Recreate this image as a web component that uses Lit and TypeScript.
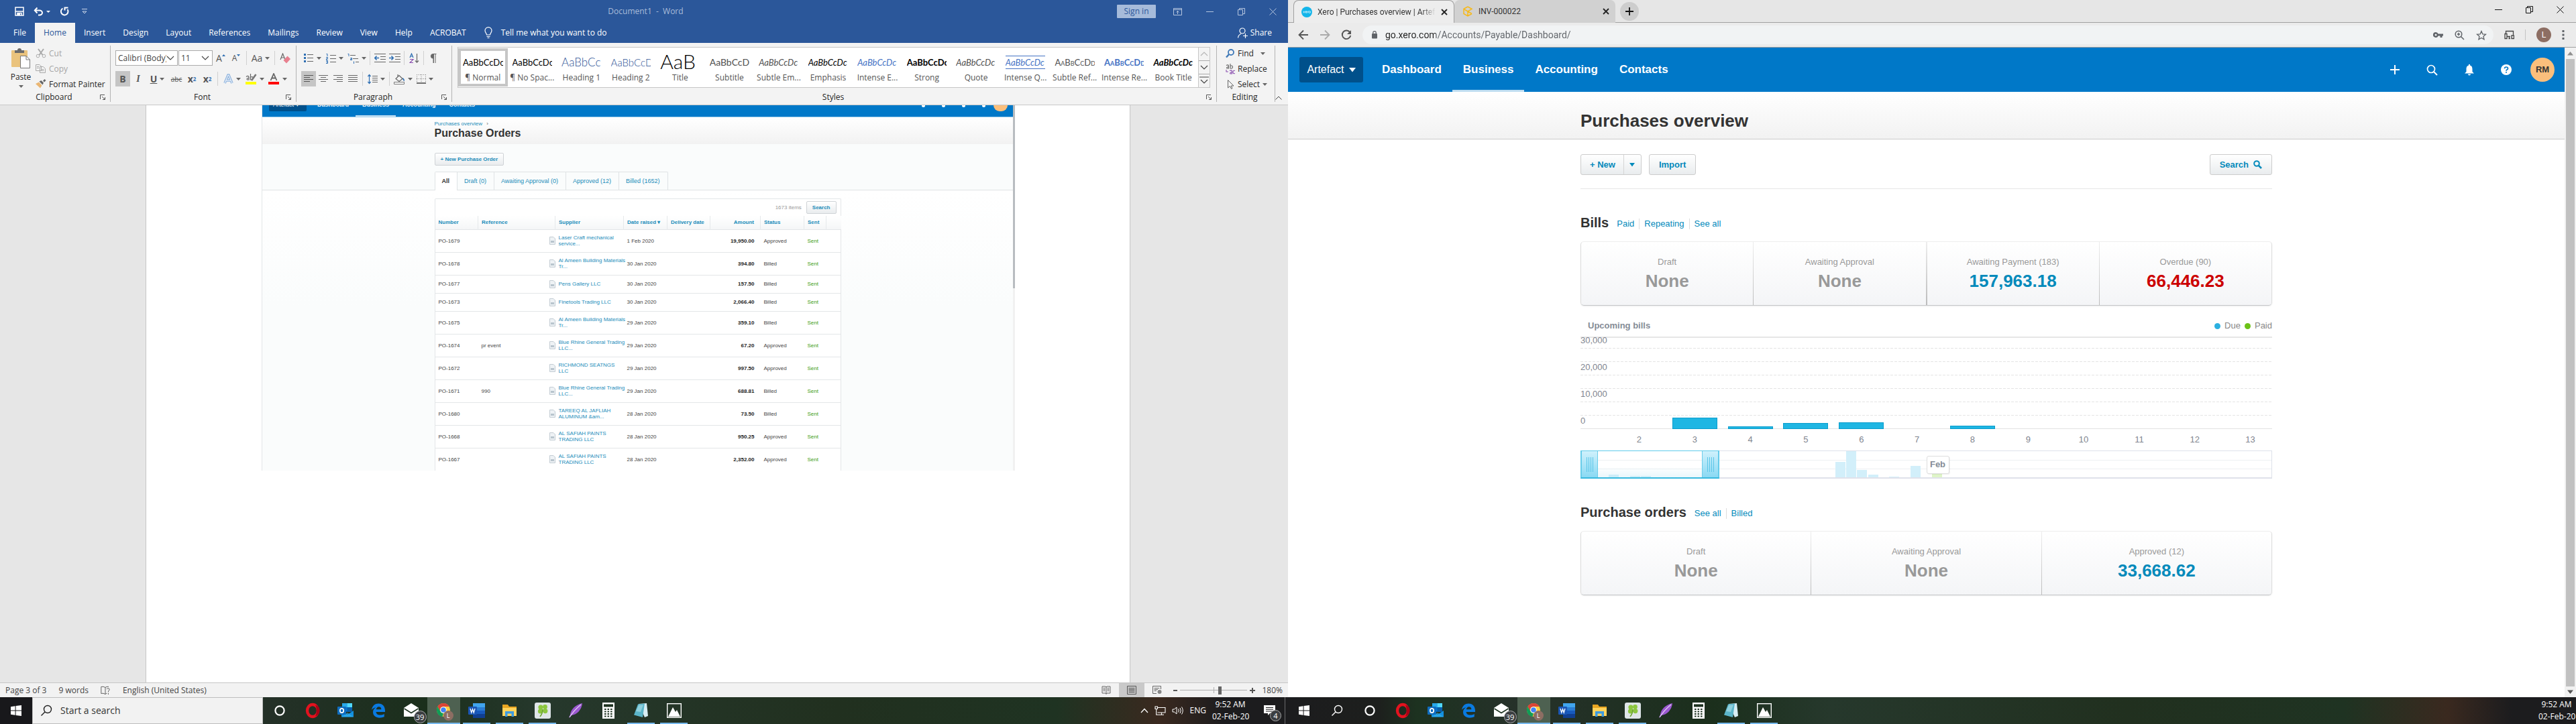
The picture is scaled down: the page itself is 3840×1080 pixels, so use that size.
import { LitElement, html, css, svg, nothing } from "lit";
import { customElement, property } from "lit/decorators.js";
import { classMap } from "lit/directives/class-map.js";

/** Inline icon with its own coordinate system. */
const icon = (w: number, h: number, content: unknown) =>
  html`<svg class="icon" width=${w} height=${h} viewBox="0 0 ${w} ${h}" fill="none" aria-hidden="true">${content}</svg>`;

const resetStyles = css`
  * { box-sizing: border-box; }
  button, input, select { font: inherit; color: inherit; margin: 0; padding: 0; border: 0; background: none; border-radius: 0; outline: none; }
  button { white-space: nowrap; cursor: pointer; }
  a { color: inherit; text-decoration: none; white-space: nowrap; }
  .icon { display: block; flex: none; }
  h1, h2, h3, p { margin: 0; }
`;

/* ------------------------------------------------------------------ */
/* Taskbar                                                             */
/* ------------------------------------------------------------------ */

const windowsLogo = icon(16, 16, svg`<path fill="#fff" d="M0 2.2 6.6 1.3V7.5H0zM7.6 1.1 16 0V7.5H7.6zM0 8.5H6.6V14.7L0 13.8zM7.6 8.5H16V16L7.6 14.9z"/>`);
const lens = (color: string) => icon(18, 18, svg`<circle cx="11" cy="7" r="5.5" stroke=${color} stroke-width="1.4"/><path d="M7 11 1.5 16.5" stroke=${color} stroke-width="1.4"/>`);

interface TaskItem { name: string; state?: "open" | "active"; art: unknown; }

const taskItems: TaskItem[] = [
  { name: "Cortana", art: icon(24, 24, svg`<circle cx="12" cy="12" r="6.6" stroke="#fff" stroke-width="2.2"/>`) },
  { name: "Opera", art: icon(24, 24, svg`<ellipse cx="12" cy="12" rx="8" ry="9" stroke="#e3131f" stroke-width="4.4"/><path d="M16 3.5C21 5 23 9 22.5 13S19 20 16 20.6C18.5 17 18.5 7 16 3.5Z" fill="#a70014"/>`) },
  { name: "Outlook", art: icon(26, 24, svg`<path fill="#0a5ea8" d="M8 1h15v13H8z"/><path fill="#28a8ea" d="M8 1h7.500v6H8z"/><path fill="#50d9ff" d="M15.500 1H23v6h-7.500z"/><path fill="#0078d4" d="M8 7h7.500v6H8z"/><path fill="#1490df" d="M7 12l9 6 9-6v9.500H7z"/><path fill="#35b8f1" d="M7 21.500 16 15l9 6.500z" opacity=".6"/><rect x="1" y="6" width="13" height="12" rx="1" fill="#0f6cbd"/><ellipse cx="7.500" cy="12" rx="2.700" ry="3.200" stroke="#fff" stroke-width="1.700"/>`) },
  { name: "Edge", art: icon(24, 24, svg`<path fill="#0a7ae0" d="M2 11C3 4.500 7 1.500 12.200 1.500 18.500 1.500 22 6 22 12.200V14H8.600C8.800 17 11.300 18.600 14.400 18.600 17 18.600 19 18 20.800 17V21.300C18.800 22.200 16.500 22.700 13.800 22.700 7.800 22.700 4 19.300 4 14.300 4 11 5.800 8.500 8.300 7.200 5.800 7.600 3.500 8.800 2 11ZM8.800 10.300H16.400C16.400 7.700 15 6.200 12.700 6.200 10.500 6.200 9.100 7.900 8.800 10.300Z"/>`) },
  { name: "Mail", art: html`<span class="badged">${icon(24, 22, svg`<path fill="#fff" d="M12 0 23 7V20H1V7z"/><path d="M1.500 8 12 14.500 22.500 8" stroke="#1d3220" stroke-width="1.600"/><path d="M5 7.500 12 12 19 7.500" fill="#fff"/>`)}<span class="badge">39</span></span>` },
  { name: "Chrome", state: "active", art: html`<span class="badged">${icon(24, 24, svg`<circle cx="11" cy="11" r="10" fill="#ffcd40"/><path fill="#db4437" d="M2.300 6A10 10 0 0 1 19.700 6H11A5 5 0 0 0 6.700 13.500z"/><path fill="#0f9d58" d="M2.300 6 6.700 13.500A5 5 0 0 0 11 16L9.500 21A10 10 0 0 1 2.300 6z"/><circle cx="11" cy="11" r="4.800" fill="#fff"/><circle cx="11" cy="11" r="3.800" fill="#4285f4"/>`)}<span class="badge profile">L</span></span>` },
  { name: "Word", state: "open", art: icon(26, 22, svg`<path fill="#41a5ee" d="M7 0h18v6H7z"/><path fill="#2b7cd3" d="M7 6h18v5H7z"/><path fill="#185abd" d="M7 11h18v5H7z"/><path fill="#103f91" d="M7 16h18v6H7z"/><rect x="0" y="5" width="13" height="12" rx="1" fill="#1b56b5"/><path d="M3 8l1.800 6L6.500 8.800 8.200 14 10 8" stroke="#fff" stroke-width="1.300"/>`) },
  { name: "File Explorer", state: "open", art: icon(24, 20, svg`<path fill="#e9a622" d="M1 1h8l2 3h11v4H1z"/><path fill="#ffd35c" d="M1 6h21v12H1z"/><path fill="#3d9be0" d="M5 11h13v8h-3.500v-4.500h-6V19H5z"/>`) },
  { name: "Clover", state: "open", art: icon(24, 24, svg`<rect x="0" y="0" width="24" height="24" rx="3" fill="#dfe5e8"/><g fill="#8cc63f"><circle cx="9" cy="7" r="3.600"/><circle cx="15.500" cy="6.500" r="3.400"/><circle cx="8.500" cy="13" r="3.600"/><circle cx="15.800" cy="12.600" r="3.600"/></g><path d="M12 10C12 15 10.500 18 8 21" stroke="#69a32e" stroke-width="1.600"/>`) },
  { name: "Feather", art: icon(24, 24, svg`<path fill="#9b59d0" d="M22 1C12 3 5 10 4 18L2 23 6 19C14 18 21 11 22 1Z"/><path d="M20 3C14 8 8 14 3 22" stroke="#e6cdf7" stroke-width="1.200"/>`) },
  { name: "Calculator", art: icon(20, 24, svg`<rect x="1" y="0" width="18" height="24" fill="#fff"/><rect x="3" y="2.500" width="14" height="4" fill="#1d3220"/><g fill="#1d3220">${[9, 12.5, 16, 19.5].map((y) => [4, 8.5, 13].map((x) => svg`<rect x=${x} y=${y} width="2.600" height="2"/>`))}</g>`) },
  { name: "Notepad", state: "open", art: icon(24, 24, svg`<path fill="#d8eef4" d="M8 2 20 1 22 20 17 22z"/><path fill="#5bb5c9" d="M7 2.500 17 1.500 14 22 1 18.500z"/><path fill="#a5dbe6" d="M8 4 15 3.200 11 14 4 13z" opacity=".7"/>`) },
  { name: "Photos", state: "open", art: icon(22, 24, svg`<rect x=".7" y="1.700" width="20.600" height="20.600" stroke="#fff" stroke-width="1.400"/><path fill="#fff" d="M2 21 9 7 13 14 15 11 20 21z"/>`) },
];

@customElement("task-bar")
export class TaskBar extends LitElement {
  @property({ type: Boolean }) primary = false;

  static styles = [resetStyles, css`
    :host { display: flex; height: 40px; color: #fff; font: 12px/18px "Open Sans", "Noto Sans", sans-serif;
      background: linear-gradient(90deg, #1c1c1e 0, #1d1f1d 7%, #1d3220 10%, #26312a 18%, #1b2f1c 33%, #26382c 42%, #21301f 65%, #1f3322 82%, #3a291f 90%, #1c1c1e 95%); }
    .slot { flex: none; width: 49px; height: 40px; display: flex; align-items: center; justify-content: center; }
    .slot.start { width: 48px; }
    .slot.start.wide { background: #18181b; }
    .slot.open, .slot.active { position: relative; }
    .slot.open::after, .slot.active::after { content: ""; position: absolute; left: 4px; right: 4px; bottom: 0; height: 2px; background: #76b9ed; }
    .slot.active { background: #4e6151; }
    .slot.active::after { left: 0; right: 0; }
    .find { flex: none; width: 344px; display: flex; align-items: center; gap: 12px; padding-left: 11px; background: #f2f2f2; border: 1px solid #bdbdbd; }
    .find input { flex: 1; min-width: 0; font-size: 14px; color: #333; }
    .find input::placeholder { color: #333; opacity: 1; }
    .badged { position: relative; display: block; }
    .badge { position: absolute; right: -11px; bottom: -8px; width: 19px; height: 19px; border-radius: 50%; background: #3c3f42; border: 1px solid #a8a8a8; font-size: 11px; line-height: 17px; text-align: center; }
    .badge.profile { right: -2px; bottom: -3px; width: 15px; height: 15px; background: #8d6e63; border: 0; font-size: 9px; line-height: 15px; }
    .spacer { flex: 1; }
    .tray { display: flex; align-items: center; gap: 9px; }
    .tray.plain { padding-right: 2px; }
    .clock { width: 54px; text-align: center; }
    .clock p { white-space: nowrap; }
    .note { width: 45px; display: flex; justify-content: center; }
    .note .badge { right: -9px; width: 17px; height: 17px; line-height: 15px; }
    .edge { width: 5px; border-left: 1px solid #6a6a6c; height: 40px; }
  `];

  private item(t: TaskItem) {
    return html`<button class=${classMap({ slot: true, open: t.state === "open", active: t.state === "active" })} aria-label=${t.name}>${t.art}</button>`;
  }

  render() {
    const clock = html`<div class="clock"><p>9:52 AM</p><p>02-Feb-20</p></div>`;
    return html`
      <button class=${classMap({ slot: true, start: true, wide: this.primary })} aria-label="Start">${windowsLogo}</button>
      ${this.primary
        ? html`<label class="find">${lens("#222")}<input type="search" placeholder="Start a search" aria-label="Start a search" /></label>`
        : html`<button class="slot" aria-label="Search">${lens("#fff")}</button>`}
      ${taskItems.map((t) => this.item(t))}
      <div class="spacer"></div>
      ${this.primary
        ? html`<div class="tray">
            ${icon(12, 8, svg`<path d="M1 7 6 1.500 11 7" stroke="#fff" stroke-width="1.300"/>`)}
            ${icon(17, 14, svg`<path d="M4 2.500H16V10H4.500M7 13.300H14M10.500 10V13M1 1h3.500v3.500H1zM2.700 4.500V13.300H7" stroke="#fff" stroke-width="1.100"/>`)}
            ${icon(18, 14, svg`<path d="M1 5H3.500L7 2V12L3.500 9H1zM9.500 4.500Q11 7 9.500 9.500M12 3Q14.500 7 12 11M14.500 1.500Q18 7 14.500 12.500" stroke="#fff" stroke-width="1"/>`)}
            <span>ENG</span>
            ${clock}
            <button class="note" aria-label="Notifications"><span class="badged">${icon(17, 16, svg`<path fill="#fff" d="M0 0H17V12H9L6 15V12H0z"/><path d="M3 3.500H14M3 6.200H14M3 9H14" stroke="#1c1c1e" stroke-width="1"/>`)}<span class="badge">4</span></span></button>
          </div><span class="edge"></span>`
        : html`<div class="tray plain">${clock}</div>`}
    `;
  }
}

/* ------------------------------------------------------------------ */
/* Purchase order list shown inside the document                       */
/* ------------------------------------------------------------------ */

const orders: [string, string, string[], string, string, string][] = [
  ["PO-1679", "", ["Laser Craft mechanical", "service..."], "1 Feb 2020", "19,950.00", "Approved"],
  ["PO-1678", "", ["Al Ameen Building Materials", "Tr..."], "30 Jan 2020", "394.80", "Billed"],
  ["PO-1677", "", ["Pens Gallery LLC"], "30 Jan 2020", "157.50", "Billed"],
  ["PO-1673", "", ["Finetools Trading LLC"], "30 Jan 2020", "2,066.40", "Billed"],
  ["PO-1675", "", ["Al Ameen Building Materials", "Tr..."], "29 Jan 2020", "359.10", "Billed"],
  ["PO-1674", "pr event", ["Blue Rhine General Trading", "LLC..."], "29 Jan 2020", "67.20", "Approved"],
  ["PO-1672", "", ["RICHMOND SEATNGS", "LLC"], "29 Jan 2020", "997.50", "Approved"],
  ["PO-1671", "990", ["Blue Rhine General Trading", "LLC..."], "29 Jan 2020", "688.81", "Billed"],
  ["PO-1680", "", ["TAREEQ AL JAFLIAH", "ALUMINUM &am..."], "28 Jan 2020", "73.50", "Billed"],
  ["PO-1668", "", ["AL SAFIAH PAINTS", "TRADING LLC"], "28 Jan 2020", "950.25", "Approved"],
  ["PO-1667", "", ["AL SAFIAH PAINTS", "TRADING LLC"], "28 Jan 2020", "2,352.00", "Approved"],
];

@customElement("purchase-orders")
export class PurchaseOrders extends LitElement {
  static styles = [resetStyles, css`
    :host { display: flex; font: 8px/9px "Liberation Sans", Arial, sans-serif; color: #444; }
    .main { flex: 1; min-width: 0; background: linear-gradient(#fff 126px, #fafcfc 300px); border-left: 1px solid #e3e6e8; }
    .rail { width: 3px; background: linear-gradient(#b8bcc0 273px, #f1f1f1 273px); }
    .nav { display: flex; align-items: flex-start; height: 18px; overflow: hidden; padding-left: 10px; background: #0078c8; color: #fff; font-size: 9px; font-weight: 700; line-height: 10px; border-bottom: 1px solid #9ccbea; }
    .nav a { padding: 0 10px; height: 17px; }
    .nav a span { display: block; margin-top: -6px; }
    .nav .org { width: 56px; height: 9px; background: #00508b; border-radius: 0 0 2px 2px; font-weight: 400; padding: 0 6px; margin-right: 6px; }
    .nav .on { box-shadow: inset 0 -2px #cfe5f5; }
    .nav .grow { flex: 1; }
    .nav .tools { display: flex; gap: 25px; padding-right: 12px; }
    .nav .dot { width: 5px; height: 3px; background: #fff; border-radius: 0 0 3px 3px; }
    .nav .face { width: 21px; height: 9px; margin-right: 8px; background: #fbbf7c; border-radius: 0 0 11px 11px; }
    .wrap { width: 606px; margin: 0 auto; }
    .head { height: 40px; padding-top: 5px; background: linear-gradient(#fff, #f2f2f2); }
    .crumb { color: #1a8cba; }
    .crumb i { color: #666; font-style: normal; padding-left: 4px; }
    h2 { font-size: 16px; line-height: 20px; color: #333; }
    .bar { height: 69px; padding-top: 13px; background: #fafcfc; border-bottom: 1px solid #dfe3e5; }
    .btn { height: 19px; padding: 0 8px; border: 1px solid #cfd3d6; border-radius: 2px; color: #1a8cba; font-weight: 700; background: linear-gradient(#fff, #e9ecee); }
    .tabs { display: inline-flex; margin-top: 9px; height: 28px; font-size: 9px; color: #1a8cba; border: 1px solid #dfe3e5; border-bottom: 0; border-radius: 2px 2px 0 0; }
    .tabs a { padding: 0 11px 0 10px; line-height: 27px; border-right: 1px solid #dfe3e5; }
    .tabs a:last-child { border: 0; }
    .tabs .sel { background: #fff; color: #333; font-weight: 700; }
    .sheet { margin-top: 12px; border: 1px solid #e3e6e8; border-bottom: 0; border-radius: 2px 2px 0 0; background: #fff; }
    .count { display: flex; justify-content: flex-end; align-items: center; gap: 7px; padding: 3px 6px 3px 0; color: #999; }
    table { width: 100%; table-layout: fixed; border-collapse: collapse; }
    th { height: 20px; padding: 0 5px; text-align: left; color: #1a8cba; border-right: 1px solid #e6e9eb; background: linear-gradient(#fff, #f5f6f7); white-space: nowrap; }
    th:last-child { border-right: 0; }
    td { height: 34px; padding: 0 5px; border-top: 1px solid #e3e6e8; white-space: nowrap; }
    .short td { height: 27px; }
    .num { text-align: right; padding-right: 9px; }
    td.num { color: #222; font-weight: 700; }
    .ref { padding-right: 0; }
    .ref div { display: flex; justify-content: space-between; align-items: center; }
    .sup { color: #1a8cba; }
    .sup span { display: block; }
    .sent { color: #3a9b12; }
  `];

  render() {
    return html`
      <div class="main">
        <nav class="nav">
          <a class="org" href="#org"><span>Artefact ▾</span></a>
          <a href="#d"><span>Dashboard</span></a><a class="on" href="#b"><span>Business</span></a>
          <a href="#a"><span>Accounting</span></a><a href="#c"><span>Contacts</span></a>
          <div class="grow"></div>
          <div class="tools"><i class="dot"></i><i class="dot"></i><i class="dot"></i><i class="dot"></i></div>
          <div class="face"></div>
        </nav>
        <div class="head"><div class="wrap">
          <a class="crumb" href="#overview">Purchases overview <i>›</i></a>
          <h2>Purchase Orders</h2>
        </div></div>
        <div class="bar"><div class="wrap">
          <button class="btn">+ New Purchase Order</button>
          <div><nav class="tabs">
            <a class="sel" href="#all">All</a><a href="#draft">Draft (0)</a><a href="#await">Awaiting Approval (0)</a><a href="#appr">Approved (12)</a><a href="#billed">Billed (1652)</a>
          </nav></div>
        </div></div>
        <div class="wrap"><div class="sheet">
          <div class="count"><span>1673 items</span><button class="btn">Search</button></div>
          <table>
            <colgroup>${[64, 115, 102, 65, 64, 75, 65, 33, 22].map((w) => html`<col style="width:${w}px" />`)}</colgroup>
            <thead><tr><th>Number</th><th>Reference</th><th>Supplier</th><th>Date raised ▾</th><th>Delivery date</th><th class="num">Amount</th><th>Status</th><th>Sent</th><th></th></tr></thead>
            <tbody>
              ${orders.map(([no, ref, sup, date, amount, status]) => html`
                <tr class=${sup.length === 1 ? "short" : ""}>
                  <td>${no}</td>
                  <td class="ref"><div><span>${ref}</span>${icon(9, 12, svg`<path d="M.5 .5H6L8.500 3V11.500H.5z" fill="#eef2f5" stroke="#c3ccd3"/><path d="M2 6h5v3H2z" fill="#b8c4cd"/>`)}</div></td>
                  <td class="sup">${sup.map((line) => html`<span>${line}</span>`)}</td>
                  <td>${date}</td><td></td><td class="num">${amount}</td><td>${status}</td><td class="sent">Sent</td><td></td>
                </tr>`)}
            </tbody>
          </table>
        </div></div>
      </div>
      <div class="rail"></div>`;
  }
}

/* ------------------------------------------------------------------ */
/* Word window                                                         */
/* ------------------------------------------------------------------ */

const G = "#666";
const B = "#2f6fb3";
const lines = (rows: [number, number, number][], color = G) =>
  svg`<path d=${rows.map(([x, y, w]) => `M${x} ${y}h${w}`).join("")} stroke=${color} stroke-width="1"/>`;

const styleSet: [string, string, string][] = [
  ["AaBbCcDc", "¶ Normal", "sel"],
  ["AaBbCcDc", "¶ No Spac...", ""],
  ["AaBbCc", "Heading 1", "head1"],
  ["AaBbCcD", "Heading 2", "head2"],
  ["AaB", "Title", "big"],
  ["AaBbCcD", "Subtitle", "soft airy"],
  ["AaBbCcDc", "Subtle Em...", "it soft"],
  ["AaBbCcDc", "Emphasis", "it"],
  ["AaBbCcDc", "Intense E...", "it blue"],
  ["AaBbCcDc", "Strong", "strong"],
  ["AaBbCcDc", "Quote", "it soft"],
  ["AaBbCcDc", "Intense Q...", "it blue rule"],
  ["AaBbCcDd", "Subtle Ref...", "caps soft"],
  ["AaBbCcDd", "Intense Re...", "caps blue strong"],
  ["AaBbCcDc", "Book Title", "it strong"],
];

@customElement("word-window")
export class WordWindow extends LitElement {
  static styles = [resetStyles, css`
    :host { display: flex; flex-direction: column; font: 12px/16px "Open Sans", "Noto Sans", sans-serif; color: #262626; background: #e6e6e6; }
    .titlebar { height: 34px; display: grid; grid-template-columns: 1fr auto 1fr; align-items: center; background: #2b579a; color: #a9bcd9; padding: 0 17px 0 22px; }
    .quick { display: flex; align-items: center; gap: 14px; color: #fff; }
    .quick .pair { display: flex; align-items: center; gap: 4px; }
    .wins { display: flex; justify-content: flex-end; align-items: center; gap: 36px; }
    .signin { height: 20px; width: 58px; background: #a6bbda; color: #2b579a; border-radius: 1px; margin-right: -10px; }
    .tabs { height: 30px; display: flex; background: #2b579a; color: #fff; padding-left: 7px; }
    .tabs a { padding: 0 13px; line-height: 29px; }
    .tabs .on { background: #f3f3f3; color: #2b579a; }
    .tell { display: flex; align-items: center; gap: 13px; padding-left: 14px; }
    .share { display: flex; align-items: center; gap: 4px; margin-left: auto; padding-right: 24px; }
    .ribbon { display: flex; height: 93px; background: #f3f3f3; border-bottom: 1px solid #c8c8c8; padding-top: 4px; }
    .group { display: flex; flex-direction: column; border-right: 1px solid #b4b4b4; margin-bottom: 4px; flex: none; }
    .body { flex: 1; }
    .name { display: grid; grid-template-columns: 12px 1fr 12px; text-align: center; line-height: 15px; align-items: center; padding: 0 3px 0 0; }
    .name span { grid-column: 2; }
    .clip { width: 165px; } .font { width: 277px; } .para { width: 232px; } .edit { width: 87px; }
    .styles { flex: 1; min-width: 0; }
    .clip .body { display: grid; grid-template-columns: 42px 1fr; padding-left: 8px; }
    .paste { display: flex; flex-direction: column; align-items: center; padding: 4px 0 0 4px; gap: 4px; }
    .list { display: flex; flex-direction: column; }
    .list button { display: flex; align-items: center; gap: 4px; height: 23px; text-align: left; }
    .clip .list { padding-left: 3px; }
    .dim { color: #a6a6a6; }
    .font .body, .para .body { display: flex; flex-direction: column; gap: 8px; padding: 7px 0 0 7px; }
    .tools { display: flex; align-items: center; height: 23px; gap: 1px; }
    .tools button { width: 22px; height: 23px; display: flex; align-items: center; justify-content: center; flex: none; font-size: 14px; color: #555; }
    .para .tools { gap: 0; }
    .tools .dd { width: 33px; gap: 4px; }
    .tools .on { background: #c5c5c5; }
    .sep { width: 1px; height: 21px; background: #d0d0d0; margin: 0 3px; flex: none; }
    .combo { display: flex; align-items: center; height: 23px; border: 1px solid #ababab; background: #fff; padding: 0 4px 0 3px; }
    .combo select { flex: 1; min-width: 0; appearance: none; color: #444; overflow: hidden; }
    .combo.face { width: 93px; } .combo.size { width: 51px; }
    .tools .small { font-size: 12px; }
    .tools .bold { font-weight: 700; } .under { text-decoration: underline; } .tools .strike { text-decoration: line-through; font-size: 10px; }
    .tools .ital { font-family: "Liberation Serif", serif; font-style: italic; font-weight: 700; }
    sub, sup { font-size: 8px; line-height: 8px; color: #2f6fb3; }
    .gallery { display: flex; margin: 2px 9px 0 8px; height: 61px; background: #fff; border: 1px solid #c6c6c6; }
    .samples { flex: 1; display: grid; grid-template-columns: repeat(15, minmax(0, 1fr)); min-width: 0; }
    .sample { display: flex; flex-direction: column; padding: 7px 3px 0; min-width: 0; margin: 1px 0; }
    .sample.sel { box-shadow: inset 0 0 0 4px #c6c6c6; }
    .sample b { display: block; font: 13px/28px Lato, "Open Sans", sans-serif; color: #000; height: 28px; margin: 0 4px; overflow: hidden; text-align: left; }
    .sample small { font-size: 12px; line-height: 18px; color: #555; text-align: center; }
    .sample.head1 b { color: #2f5496; font-size: 17px; font-weight: 300; }
    .sample.head2 b { color: #2f5496; font-size: 15px; font-weight: 300; }
    .sample.big b { font-size: 30px; font-weight: 300; line-height: 24px; }
    .sample.it b { font-style: italic; } .sample.strong b { font-weight: 700; }
    .sample.soft b { color: #505050; } .sample.blue b { color: #4472c4; }
    .sample.airy b { font-size: 14px; }
    .sample.caps b { font-variant: small-caps; }
    .sample.rule b { line-height: 18px; height: 20px; margin: 4px 4px; border: solid #4472c4; border-width: 1px 0; }
    .scroll { width: 17px; display: flex; flex-direction: column; border-left: 1px solid #c6c6c6; background: #f3f3f3; }
    .scroll button { flex: 1; display: flex; align-items: center; justify-content: center; border-bottom: 1px solid #ababab; }
    .scroll button:last-child { border: 0; }
    .edit .list { padding-left: 13px; }
    .collapse { margin: auto 9px 7px auto; }
    .canvas { flex: 1; display: flex; min-height: 0; padding: 0 235px 0 217px; }
    .page { flex: 1; min-width: 0; background: #fff; border: solid #c6c6c6; border-width: 0 1px; padding: 0 171px 0 172px; overflow: hidden; }
    .status { display: flex; align-items: center; height: 22px; background: #f2f2f2; border-top: 1px solid #c6c6c6; padding: 0 8px; color: #444; gap: 18px; }
    .views { display: flex; align-items: center; margin-left: auto; height: 21px; }
    .views button { width: 38px; height: 21px; display: flex; align-items: center; justify-content: center; }
    .views .on { background: #c9c9c9; }
    .zoom { display: flex; align-items: center; gap: 4px; margin-left: -13px; }
    .zoom input { appearance: none; width: 100px; height: 12px; background: linear-gradient(#b0b0b0, #b0b0b0) center / 100% 1px no-repeat, linear-gradient(#b0b0b0, #b0b0b0) center / 1px 9px no-repeat; }
    .zoom input::-webkit-slider-thumb { appearance: none; width: 5px; height: 12px; background: #666; }
    .zoom span { padding-left: 6px; }
  `];

  private caret(color = G) {
    return icon(7, 4, svg`<path d="M0 0h7L3.500 4z" fill=${color}/>`);
  }
  private chevron(up = false, color = "#444") {
    return icon(12, 7, svg`<path d=${up ? "M1 6 6 1 11 6" : "M1 1 6 6 11 1"} stroke=${color} stroke-width="1.200"/>`);
  }
  private launcher = icon(8, 8, svg`<path d="M.5 7V.5H7M3 3l4 4M7.500 4V7.500H4" stroke="#555"/>`);

  private group(cls: string, name: string, body: unknown, launch = true) {
    return html`<section class="group ${cls}"><div class="body">${body}</div><div class="name"><span>${name}</span>${launch ? this.launcher : nothing}</div></section>`;
  }
  private dd(label: string, art: unknown) {
    return html`<button class="dd" aria-label=${label}>${art}${this.caret()}</button>`;
  }

  render() {
    const tabs = ["Home", "Insert", "Design", "Layout", "References", "Mailings", "Review", "View", "Help", "ACROBAT"];
    return html`
      <header class="titlebar">
        <div class="quick">
          ${icon(14, 14, svg`<path d="M1 1H13V13H1zM4 13V9.500H10V13M1 7H13" stroke="#fff" stroke-width="1.500"/><path fill="#fff" d="M4 9h4v4H4z"/>`)}
          <span class="pair">${icon(15, 14, svg`<path d="M2 5.500H9A4 3.500 0 0 1 9 12.500H7M5.500 1.500 1.800 5.500 5.500 9.500" stroke="#fff" stroke-width="2"/>`)}${icon(6, 3, svg`<path d="M0 0h6L3 3z" fill="#fff"/>`)}</span>
          ${icon(14, 14, svg`<path d="M4.500 2.500A5.300 5.300 0 1 0 11.500 4M7.500 .5V5.500M7.500 1.500H12.500" stroke="#fff" stroke-width="2"/>`)}
          ${icon(16, 8, svg`<path d="M5 .5H13M6 4 9 7 12 4z" stroke="#cdd8ea"/>`)}
        </div>
        <span>Document1&nbsp; -&nbsp; Word</span>
        <div class="wins">
          <button class="signin">Sign in</button>
          ${icon(13, 11, svg`<path d="M.5 .5H12.500V10.500H.5zM.5 2.500H12.500M6.500 9V4.500M4.500 6.500 6.500 4.500 8.500 6.500" stroke="#b5c5de"/>`)}
          ${icon(11, 11, svg`<path d="M0 5.500H11" stroke="#b5c5de"/>`)}
          ${icon(11, 11, svg`<path d="M.5 2.500H7.500V10.500H.5zM2.500 2.500V.5H10.500V8.500H7.500" stroke="#b5c5de"/>`)}
          ${icon(11, 11, svg`<path d="M.5 .5 10.500 10.500M10.500 .5 .5 10.500" stroke="#b5c5de"/>`)}
        </div>
      </header>
      <nav class="tabs">
        <a href="#file">File</a>
        ${tabs.map((t) => html`<a href="#${t}" class=${t === "Home" ? "on" : ""}>${t}</a>`)}
        <button class="tell">${icon(12, 18, svg`<path d="M3.500 12C3.500 10 1 8.500 1 5.500A5 4.800 0 0 1 11 5.500C11 8.500 8.500 10 8.500 12zM3.500 14.500H8.500M4.500 16.500H7.500" stroke="#fff" stroke-width="1.200"/>`)}Tell me what you want to do</button>
        <button class="share">${icon(15, 16, svg`<circle cx="7" cy="5" r="4" stroke="#fff" stroke-width="1.200"/><path d="M.5 15.500Q1 11 5 9.500M8 12.500H15M11.500 9V16" stroke="#fff" stroke-width="1.200"/>`)}Share</button>
      </nav>
      <div class="ribbon">
        ${this.group("clip", "Clipboard", html`
          <button class="paste">${icon(28, 31, svg`<rect x="0" y="3" width="24" height="25" rx="1" fill="#eac37d"/><path fill="#6b6b6b" d="M5 3H9A3 3 0 0 1 15 3H19V7H5z"/><path fill="#fff" stroke="#777" d="M13.500 11.500H22L27.500 17V29.500H13.500z"/><path d="M22 11.500V17H27.500" stroke="#777"/>`)}Paste${this.caret()}</button>
          <div class="list">
            <button class="dim">${icon(16, 15, svg`<path d="M4 1 10.500 10M12 1 5.500 10" stroke="#a9a9a9" stroke-width="2"/><circle cx="3.500" cy="11.500" r="2.300" stroke="#a9a9a9"/><circle cx="12.500" cy="11.500" r="2.300" stroke="#a9a9a9"/>`)}Cut</button>
            <button class="dim">${icon(16, 15, svg`<path d="M.5 1.500H6L8.500 4V10.500H.5zM6.500 4.500H11.500L14.500 7.500V13.500H6.500z" fill="#f3f3f3" stroke="#a9a9a9"/><path d="M8.500 8.500H12.500M8.500 10.500H12.500M2 4.500H5M2 6.500H5" stroke="#a9a9a9"/>`)}Copy</button>
            <button>${icon(16, 15, svg`<path fill="#eab673" d="M0 7 5 4.500 9.500 9.500 7 13.500z"/><path fill="#666" d="M5.500 3.500 8.500 2 12 5.500 10.500 8.500zM11 2.500 13.500 0 15.500 2 13 4.500z"/>`)}Format Painter</button>
          </div>`)}
        ${this.group("font", "Font", html`
          <div class="tools">
            <label class="combo face"><select aria-label="Font"><option>Calibri (Body)</option></select>${this.chevron()}</label>
            <label class="combo size"><select aria-label="Font size"><option>11</option></select>${this.chevron()}</label>
            <button aria-label="Grow font">A${icon(5, 12, svg`<path d="M0 3h5L2.500 0z" fill=${B}/>`)}</button>
            <button class="small" aria-label="Shrink font">A${icon(5, 12, svg`<path d="M0 0h5L2.500 3z" fill=${B}/>`)}</button>
            <i class="sep"></i>
            <button class="dd" aria-label="Change case">Aa${this.caret()}</button>
            <i class="sep"></i>
            <button aria-label="Clear formatting">${icon(16, 16, svg`<path d="M1 10 4.500 1 8 10M2.300 7H6.500" stroke="#666" stroke-width="1.200"/><path fill="#e8808f" d="M5.500 11 11.500 4.500 16 9 10 15.500z"/>`)}</button>
          </div>
          <div class="tools">
            <button class="on bold">B</button>
            <button class="ital">I</button>
            <button class="dd bold"><span class="under">U</span>${this.caret()}</button>
            <button class="strike">abc</button>
            <button class="bold">x<sub>2</sub></button>
            <button class="bold">x<sup>2</sup></button>
            <i class="sep"></i>
            ${this.dd("Text effects", icon(15, 16, svg`<path d="M2 14 7 2H8L13 14M4 10H11" stroke="#8fb4de" stroke-width="3.500"/><path d="M2 14 7 2H8L13 14M4 10H11" stroke="#fff" stroke-width="1"/>`))}
            ${this.dd("Highlight", icon(17, 17, svg`<path fill="#ff0" d="M0 13h16v4H0z"/><path d="M1 5.500Q4 3 5 6V10H2.500Q1 8 5 7M7.500 1V10Q12 10 11 6.500 10 4.500 7.500 6.500" stroke="#666" stroke-width="1.200"/><path d="M15.500 2 9 11" stroke="#777" stroke-width="2.600"/>`))}
            ${this.dd("Font colour", icon(17, 17, svg`<path fill="#f00" d="M0 13h16v4H0z"/><path d="M3.500 11 8 1 12.500 11M5 7.500H11" stroke="#666" stroke-width="1.800"/>`))}
          </div>`)}
        ${this.group("para", "Paragraph", html`
          <div class="tools">
            ${this.dd("Bullets", icon(15, 15, svg`${lines([[5, 2.5, 9], [5, 7.5, 9], [5, 12.5, 9]])}<path fill=${B} d="M0 1h3v3H0zM0 6h3v3H0zM0 11h3v3H0z"/>`))}
            ${this.dd("Numbering", icon(15, 16, svg`${lines([[6, 3.5, 9], [6, 8.5, 9], [6, 13.5, 9]])}<path stroke=${B} d="M.5 1.500H2V5M0 6.500H2.500V8.500H.5V10.500H3M0 12H2.500V15.500H0M.5 13.700H2.500"/>`))}
            ${this.dd("Multilevel list", icon(17, 16, svg`${lines([[4, 3.5, 8], [8, 8.5, 8], [12, 13.5, 5]])}<path stroke=${B} d="M.5 1.500H2V5M4.500 7.500H6.500V10.500H4.500V9H6.500M9.500 12.500V16"/>`))}
            <i class="sep"></i>
            <button aria-label="Decrease indent">${icon(17, 14, svg`${lines([[0, .5, 17], [9, 4.5, 8], [9, 8.5, 8], [0, 12.5, 17]])}<path d="M0 6.500H7M3.500 3.500 .8 6.500 3.500 9.500" stroke=${B} stroke-width="1.600"/>`)}</button>
            <button aria-label="Increase indent">${icon(17, 14, svg`${lines([[0, .5, 17], [9, 4.5, 8], [9, 8.5, 8], [0, 12.5, 17]])}<path d="M0 6.500H6.500M3.500 3.500 6.200 6.500 3.500 9.500" stroke=${B} stroke-width="1.600"/>`)}</button>
            <i class="sep"></i>
            <button aria-label="Sort">${icon(15, 16, svg`<path d="M1 7 3.500 1 6 7M2 5H5" stroke=${B} stroke-width="1.200"/><path d="M1 9.500H6L1 14.500H6" stroke="#8a4fb0" stroke-width="1.200"/><path d="M11.500 1V14M9 11.500 11.500 14.200 14 11.500" stroke="#666" stroke-width="1.200"/>`)}</button>
            <i class="sep"></i>
            <button aria-label="Show marks">${icon(10, 14, svg`<path d="M9.500 .5H4.500A3 3 0 0 0 4.500 7H5V14M5.500 .5V14M8 .5V14" stroke="#666"/><path fill="#666" d="M5 .5A3.200 3.200 0 0 0 5 7z"/>`)}</button>
          </div>
          <div class="tools">
            <button class="on" aria-label="Align left">${icon(14, 14, lines([[0, 1.5, 14], [0, 4.5, 9], [0, 7.5, 14], [0, 10.5, 9]], "#555"))}</button>
            <button aria-label="Centre">${icon(14, 14, lines([[0, 1.5, 14], [3, 4.5, 8], [0, 7.5, 14], [3, 10.5, 8]]))}</button>
            <button aria-label="Align right">${icon(14, 14, lines([[0, 1.5, 14], [5, 4.5, 9], [0, 7.5, 14], [5, 10.5, 9]]))}</button>
            <button aria-label="Justify">${icon(14, 14, lines([[0, 1.5, 14], [0, 4.5, 14], [0, 7.5, 14], [0, 10.5, 14]]))}</button>
            <i class="sep"></i>
            ${this.dd("Line spacing", icon(15, 16, svg`${lines([[7, 3.5, 8], [7, 6.5, 8], [7, 9.5, 8], [7, 12.5, 8]])}<path d="M2.500 1.500V14.500M.3 4 2.500 1.500 4.700 4M.3 12 2.500 14.500 4.700 12" stroke=${B} stroke-width="1.200"/>`))}
            <i class="sep"></i>
            ${this.dd("Shading", icon(17, 16, svg`<path d="M3 7.500 8 2.500 13 7.500 8 11.500zM6 1V5" stroke="#666" stroke-width="1.200"/><path fill=${B} d="M13 6Q17 8 15.500 11.500 13 9 13 6z"/><path d="M.5 12.500H15.500V15.500H.5z" fill="#fff" stroke="#777"/>`))}
            ${this.dd("Borders", icon(14, 14, svg`<path d="M.5 0V13M13.500 0V13M7 0V13M0 .5H14M0 6.500H14" stroke="#888" stroke-dasharray="1 1.500"/><path d="M0 13H14" stroke="#444" stroke-width="1.500"/>`))}
          </div>`)}
        ${this.group("styles", "Styles", html`
          <div class="gallery">
            <div class="samples">${styleSet.map(([text, name, cls]) => html`<button class="sample ${cls}"><b>${text}</b><small>${name}</small></button>`)}</div>
            <div class="scroll"><button aria-label="Previous styles">${this.chevron(true, "#b5b5b5")}</button><button aria-label="Next styles">${this.chevron()}</button><button aria-label="More styles">${icon(14, 13, svg`<path d="M0 1H14M2 5 7 10 12 5" stroke="#444" stroke-width="1.200"/>`)}</button></div>
          </div>`)}
        ${this.group("edit", "Editing", html`
          <div class="list">
            <button>${icon(14, 14, svg`<circle cx="8" cy="5" r="4" stroke="#3f79b8" stroke-width="1.800"/><path d="M5 8 1 12.500" stroke="#3f79b8" stroke-width="2.400"/>`)}Find&nbsp;&nbsp; ${this.caret()}</button>
            <button>${icon(14, 16, svg`<path d="M1 2.500Q4 1 4.500 3V7H2Q.5 5.500 4.500 4.500M7 0V7Q11 7.500 10.500 4.500 10 2 7 3.500" stroke="#666" stroke-width="1.100"/><path d="M1 9V12H4M6 10.500Q9 9 9.500 11V15H7Q5.500 13.500 9.500 12.500M14 10.500Q11 9.500 11 12.500 11 15.500 14 14.500" stroke="#8a4fb0" stroke-width="1.100"/>`)}Replace</button>
            <button>${icon(14, 16, svg`<path d="M3.500 1.500V13L6.500 10.500 8.500 14.500 10 13.800 8.300 10H12z" stroke="#666"/>`)}Select${this.caret()}</button>
          </div>`, false)}
        <button class="collapse" aria-label="Collapse ribbon">${icon(10, 6, svg`<path d="M.5 5.500 5 1 9.500 5.500" stroke="#444"/>`)}</button>
      </div>
      <main class="canvas"><div class="page"><purchase-orders></purchase-orders></div></main>
      <footer class="status">
        <span>Page 3 of 3</span><span>9 words</span>
        ${icon(15, 14, svg`<path d="M7 2.500V12.500M7 2.500Q4 .5 .8 1.500V11.500Q4 10.500 7 12.500Q8 11.500 9.500 11.300M7 2.500Q8.500 1 12 1.300M9 5Q10 3 12.500 4 14.500 6 11.500 8V9.500M11.500 11V13" stroke="#666"/>`)}
        <span>English (United States)</span>
        <div class="views">
          <button aria-label="Read mode">${icon(14, 13, svg`<path d="M1 1H6L7 2 8 1H13V11H8L7 12.500 6 11H1zM7 2V12M2.500 3.500H5.500M2.500 5.500H5.500M2.500 7.500H5.500M8.500 3.500H11.500M8.500 5.500H11.500M8.500 7.500H11.500" stroke="#666"/>`)}</button>
          <button class="on" aria-label="Print layout">${icon(14, 13, svg`<path d="M.5 .5H13.500V12.500H.5zM2.500 3.500H11.500M2.500 5.500H11.500M2.500 7.500H11.500M2.500 9.500H11.500" stroke="#555"/>`)}</button>
          <button aria-label="Web layout">${icon(14, 13, svg`<path d="M12.500 5V.5H.5V11.500H6M2.500 3.500H10.500M2.500 5.500H8M2.500 7.500H6" stroke="#666"/><circle cx="10.500" cy="9" r="3" fill="#888"/>`)}</button>
        </div>
        <div class="zoom">${icon(6, 12, svg`<path d="M0 6H6" stroke="#555" stroke-width="2"/>`)}<input type="range" min="0" max="100" value="60" aria-label="Zoom" />${icon(8, 12, svg`<path d="M0 6H8M4 2V10" stroke="#555" stroke-width="2"/>`)}<span>180%</span></div>
      </footer>`;
  }
}

/* ------------------------------------------------------------------ */
/* Browser window with the purchases dashboard                         */
/* ------------------------------------------------------------------ */

interface Stat { label: string; value: string; tone?: string; }

const billStats: Stat[] = [
  { label: "Draft", value: "None" },
  { label: "Awaiting Approval", value: "None" },
  { label: "Awaiting Payment (183)", value: "157,963.18", tone: "blue" },
  { label: "Overdue (90)", value: "66,446.23", tone: "red" },
];
const orderStats: Stat[] = [
  { label: "Draft", value: "None" },
  { label: "Awaiting Approval", value: "None" },
  { label: "Approved (12)", value: "33,668.62", tone: "blue" },
];
/** Bar heights in pixels for each day on the axis. */
const days: [number, number][] = [[2, 0], [3, 17], [4, 4], [5, 9], [6, 10], [7, 0], [8, 5], [9, 0], [10, 0], [11, 0], [12, 0], [13, 0]];
/** Overview bars: x, height. */
const overview: [number, number][] = [[41, 4], [73, 2], [89, 2], [379, 23], [395, 39], [411, 11], [428, 4], [459, 1], [491, 17]];

@customElement("browser-window")
export class BrowserWindow extends LitElement {
  static styles = [resetStyles, css`
    :host { display: flex; flex-direction: column; background: #fff; font: 13px/20px "Liberation Sans", Arial, sans-serif; color: #333; }
    .strip { display: flex; height: 34px; padding: 0 18px 0 8px; background: #e6e6e6; font: 12px/16px Roboto, "Open Sans", sans-serif; color: #333; box-shadow: inset 0 -1px #a0a0a0; }
    .tab { width: 240px; display: flex; align-items: center; gap: 8px; padding: 0 9px 0 12px; border-radius: 8px 8px 0 0; background: #d1d1d1; }
    .tab.on { background: #ededed; border: 1px solid #a0a0a0; border-bottom: 0; padding-left: 11px; }
    .tab span { flex: 1; min-width: 0; overflow: hidden; white-space: nowrap; }
    .tab.on span { mask-image: linear-gradient(90deg, #000 88%, transparent); }
    .plus { width: 28px; height: 28px; margin: 3px 0 0 7px; border-radius: 50%; background: #cdcdcd; display: flex; align-items: center; justify-content: center; }
    .wins { display: flex; align-items: center; gap: 35px; margin-left: auto; padding-bottom: 5px; }
    .address { display: flex; align-items: center; height: 37px; padding: 0 17px 0 15px; gap: 16px; background: #ebebeb; border-bottom: 1px solid #a0a0a0; }
    .omni { flex: 1; display: flex; align-items: center; gap: 17px; height: 28px; padding: 0 10px 0 14px; border-radius: 14px; background: #f1f3f4; }
    .omni .icon:first-child { margin-right: -5px; }
    .omni input { flex: 1; font: 14px/20px Roboto, "Open Sans", sans-serif; color: transparent; background: linear-gradient(90deg, #222 75px, #5f6368 75px); background-clip: text; -webkit-background-clip: text; }
    .cut { width: 1px; height: 16px; background: #c4c4c4; }
    .me { width: 22px; height: 22px; border-radius: 50%; background: #8d6e63; color: #fff; font-size: 12px; }
    .view { flex: 1; display: flex; min-height: 0; }
    .site { flex: 1; min-width: 0; }
    .rail { width: 17px; background: #f1f1f1; display: flex; flex-direction: column; align-items: center; padding: 6px 0 5px; gap: 5px; }
    .rail i { width: 13px; flex: 1; background: #c1c1c1; }
    .nav { display: flex; align-items: center; height: 66px; padding: 0 15px 0 17px; background: #0078c8; color: #fff; font-size: 17px; font-weight: 700; }
    .nav a { padding: 0 16px; line-height: 66px; }
    .nav a.on { box-shadow: inset 0 -3px #bfddf1; }
    .org { height: 38px; width: 95px; display: flex; align-items: center; justify-content: center; gap: 7px; margin-right: 12px; border-radius: 3px; background: #00508b; }
    .nav .org { font-weight: 400; font-size: 16px; }
    .acts { margin-left: auto; display: flex; align-items: center; gap: 39px; }
    .face { width: 36px; height: 36px; border-radius: 50%; background: #fbbf7c; color: #333; margin-left: -11px; }
    .nav .face { font-size: 13px; }
    .head { height: 71px; background: linear-gradient(#fff, #f2f2f2); border-bottom: 1px solid #ccc; }
    .wrap { width: 1031px; max-width: 100%; margin: 0 auto; }
    h1 { font-size: 26px; line-height: 32px; padding-top: 27px; }
    .bar { display: flex; gap: 11px; padding: 22px 0 20px; border-bottom: 1px solid #e6e6e6; }
    .bar button { height: 31px; color: #048abb; font-weight: 700; display: flex; align-items: center; justify-content: center; gap: 7px; }
    .btn, .split { border: 1px solid #ccc; border-radius: 3px; background: linear-gradient(#fff, #e9ecee); }
    .btn { padding: 0 14px; }
    .split { display: flex; }
    .bar .split button { height: 29px; padding: 0 12px 0 13px; }
    .bar .split button + button { width: 26px; padding: 0; border-left: 1px solid #d5d5d5; }
    .bar .btn:last-child { margin-left: auto; }
    .title { display: flex; align-items: center; margin: 36px 0 14px; line-height: 28px; }
    h2 { font-size: 20px; margin-right: 5px; }
    .title a { padding: 0 7px; color: #048abb; line-height: 16px; margin-top: 4px; }
    .title a + a { border-left: 1px solid #ddd; }
    .cards { display: flex; height: 96px; border: 1px solid #ccc; border-color: #eee #ddd #c4c6c8; border-radius: 5px; background: linear-gradient(#fff, #f4f5f7); box-shadow: 0 1px 2px rgba(0, 0, 0, .08); }
    .card { flex: 1; text-align: center; padding-top: 20px; color: #999; }
    .card + .card { border-left: 1px solid; border-image: linear-gradient(#eee, #bbb) 1; }
    .four .card:nth-child(3) { border-left-width: 2px; }
    .card strong { display: block; font-size: 26px; line-height: 36px; }
    .blue strong { color: #048abb; } .red strong { color: #c00; }
    .chart-head { display: flex; align-items: center; justify-content: space-between; margin-top: 20px; padding: 0 0 6px 11px; border-bottom: 2px solid #e6e6e6; color: #858c96; }
    h3 { font-size: 13px; }
    .legend { display: flex; gap: 6px; align-items: center; color: #888; }
    .legend i { width: 9px; height: 9px; border-radius: 50%; background: #2bb0e0; }
    .legend i.paid { background: #6cc217; }
    .plot { display: grid; height: 136px; color: #7f858f; }
    .plot > div { grid-area: 1 / 1; }
    .lines { display: flex; flex-direction: column; }
    .lines i { height: 20px; background: repeating-linear-gradient(90deg, #e4e4e4 0 4px, transparent 4px 6px) bottom / 100% 1px no-repeat; }
    .lines i:first-child { height: 16px; }
    .lines i:last-child { background: linear-gradient(#e2e2e2, #e2e2e2) bottom / 100% 1px no-repeat; }
    .ticks { display: flex; flex-direction: column; gap: 20px; margin-top: -6px; }
    .days { display: grid; grid-template-columns: repeat(12, minmax(0, 1fr)); margin: 0 -9px 0 46px; justify-items: center; align-items: end; color: #7f858f; }
    .days i { width: 67px; background: #1fb6e3; border: 1px solid #0a9dcc; }
    .axis { padding: 6px 0; }
    .range { position: relative; height: 42px; border: 1px solid #dde1ea; border-bottom: 2px solid #dfe1ea; background: #fff; }
    .range > svg { display: block; width: 100%; height: 39px; }
    .pick { position: absolute; left: -1px; top: -1px; width: 207px; height: 42px; display: flex; justify-content: space-between; border: 1px solid #5fcbea; border-bottom: 2px solid #37b9de; background: linear-gradient(transparent 60%, rgba(190, 232, 245, .35)); }
    .grip { width: 25px; display: flex; align-items: center; justify-content: center; background: linear-gradient(#cff1fc, #8ad9f3); border: solid #6ccdea; border-width: 0 1px; }
    .month { position: absolute; left: 50%; top: 7px; width: 34px; height: 27px; line-height: 24px; text-align: center; font-weight: 700; color: #858c96; border: 1px solid #ddd; border-radius: 3px; background: #fff; box-shadow: 1px 1px 1px rgba(0, 0, 0, .06); }
  `];

  private cards(items: Stat[], cls: string) {
    return html`<div class="cards ${cls}">${items.map((s) => html`<div class="card ${s.tone ?? ""}">${s.label}<strong>${s.value}</strong></div>`)}</div>`;
  }

  render() {
    const x = icon(10, 10, svg`<path d="M1 1 9 9M9 1 1 9" stroke="#222" stroke-width="1.800"/>`);
    return html`
      <header class="strip">
        <div class="tab on">
          ${icon(16, 16, svg`<circle cx="8" cy="8" r="8" fill="#13b5ea"/><path d="M2.500 6.500 5 9.500M5 6.500 2.500 9.500M6 8H8.200Q8 6.500 7 6.500 6 6.600 6 8 6.200 9.500 8 9.300M9.300 9.500V7.500Q9.300 6.500 10.500 6.600" stroke="#fff" stroke-width=".7"/><circle cx="12.200" cy="8" r="1.400" stroke="#fff" stroke-width=".7"/>`)}
          <span>Xero | Purchases overview | Artefact</span><button aria-label="Close tab">${x}</button>
        </div>
        <div class="tab">
          ${icon(16, 16, svg`<path d="M8 1 2 4.300V11.500L8 15 14 11.500M8 1 14 4.300 8 8V15M2 4.300 8 8 14 11.500" stroke="#f6b91c" stroke-width="1.500"/>`)}
          <span>INV-000022</span><button aria-label="Close tab">${x}</button>
        </div>
        <button class="plus" aria-label="New tab">${icon(12, 12, svg`<path d="M6 0V12M0 6H12" stroke="#111" stroke-width="1.800"/>`)}</button>
        <div class="wins">
          <button aria-label="Minimise">${icon(11, 11, svg`<path d="M0 5.500H11" stroke="#111"/>`)}</button>
          <button aria-label="Restore">${icon(11, 11, svg`<path d="M.5 2.500H7.500V10.500H.5zM2.500 2.500V.5H10.500V8.500H7.500" stroke="#111"/>`)}</button>
          <button aria-label="Close">${icon(11, 11, svg`<path d="M.5 .5 10.500 10.500M10.500 .5 .5 10.500" stroke="#111"/>`)}</button>
        </div>
      </header>
      <div class="address">
        <button aria-label="Back">${icon(16, 16, svg`<path d="M15 8H2M8 1.500 1.500 8 8 14.500" stroke="#555" stroke-width="1.800"/>`)}</button>
        <button aria-label="Forward">${icon(16, 16, svg`<path d="M1 8H14M8 1.500 14.500 8 8 14.500" stroke="#aaa" stroke-width="1.800"/>`)}</button>
        <button aria-label="Reload">${icon(16, 16, svg`<path d="M13.500 4.500A6.300 6.300 0 1 0 14.300 9" stroke="#555" stroke-width="1.900"/><path fill="#555" d="M15 1V7H9z"/>`)}</button>
        <div class="omni">
          ${icon(8, 12, svg`<rect x="0" y="4" width="8" height="7.500" rx="1" fill="#5f6368"/><path d="M1.800 4V2.800A2.200 2.200 0 0 1 6.200 2.800V4" stroke="#5f6368" stroke-width="1.200"/>`)}
          <input type="text" aria-label="Address" value="go.xero.com/Accounts/Payable/Dashboard/" />
          ${icon(15, 14, svg`<path fill="#5f6368" fill-rule="evenodd" d="M4 3A4 4 0 0 1 7.600 5.500H15V8.500H13.500V11H10.500V8.500H7.600A4 4 0 1 1 4 3zM4 5.500a1.500 1.500 0 1 0 0 3a1.500 1.500 0 0 0 0-3z"/>`)}
          ${icon(15, 15, svg`<circle cx="6" cy="6" r="4.800" stroke="#5f6368" stroke-width="1.500"/><path d="M9.500 9.500 14 14M3.800 6H8.200M6 3.800V8.200" stroke="#5f6368" stroke-width="1.500"/>`)}
          ${icon(16, 15, svg`<path d="M8 1.500 9.800 5.800 14.500 6.200 11 9.200 12 13.800 8 11.400 4 13.800 5 9.200 1.500 6.200 6.200 5.800z" stroke="#5f6368" stroke-width="1.300"/>`)}
        </div>
        ${icon(15, 14, svg`<path d="M2.500 5V1.500H13.500V7M1 5.500H4V12.500H1zM4 9.500H9M6.500 12.500H9M7.500 9.500V12.500M14.500 8H11V12.500H14.500z" stroke="#444" stroke-width="1.300"/>`)}
        <i class="cut"></i>
        <button class="me">L</button>
        ${icon(4, 16, svg`<path fill="#5f6368" d="M.5 1h3v3h-3zM.5 6.500h3v3h-3zM.5 12h3v3h-3z"/>`)}
      </div>
      <div class="view">
        <div class="site">
          <nav class="nav">
            <button class="org">Artefact${icon(10, 7, svg`<path fill="#fff" d="M0 0H10L5 6.500z"/>`)}</button>
            <a href="#dashboard">Dashboard</a><a class="on" href="#business">Business</a><a href="#accounting">Accounting</a><a href="#contacts">Contacts</a>
            <div class="acts">
              ${icon(16, 16, svg`<path d="M8 1V15M1 8H15" stroke="#fff" stroke-width="2"/>`)}
              ${icon(17, 17, svg`<circle cx="7" cy="7" r="5.500" stroke="#fff" stroke-width="1.700"/><path d="M11 11 16 16" stroke="#fff" stroke-width="2"/>`)}
              ${icon(16, 17, svg`<path fill="#fff" d="M7 0H9V1.500C12 2.300 12.500 5 12.500 7.500V11L15 13.500H1L3.500 11V7.500C3.500 5 4 2.300 7 1.500zM6 14.500H10A2 2 0 0 1 6 14.500z"/>`)}
              ${icon(16, 16, svg`<circle cx="8" cy="8" r="8" fill="#fff"/><path d="M5.500 6.200Q5.600 4 8 4 10.500 4 10.500 6.200 10.500 7.400 9 8 8 8.500 8 9.800M8 11V12.700" stroke="#0078c8" stroke-width="1.700"/>`)}
              <button class="face">RM</button>
            </div>
          </nav>
          <header class="head"><div class="wrap"><h1>Purchases overview</h1></div></header>
          <main class="wrap">
            <div class="bar">
              <div class="split"><button>+ New</button><button aria-label="More new options">${icon(8, 6, svg`<path fill="#048abb" d="M0 0H8L4 5.500z"/>`)}</button></div>
              <button class="btn">Import</button>
              <button class="btn">Search${icon(13, 13, svg`<circle cx="5" cy="5" r="3.800" stroke="#048abb" stroke-width="2"/><path d="M7.800 7.800 12 12" stroke="#048abb" stroke-width="2.600"/>`)}</button>
            </div>
            <div class="title"><h2>Bills</h2><a href="#paid">Paid</a><a href="#repeating">Repeating</a><a href="#bills">See all</a></div>
            ${this.cards(billStats, "four")}
            <div class="chart-head"><h3>Upcoming bills</h3><div class="legend"><i></i>Due<i class="paid"></i>Paid</div></div>
            <div class="plot">
              <div class="lines">${[0, 1, 2, 3, 4, 5, 6].map(() => html`<i></i>`)}</div>
              <div class="ticks">${["30,000", "20,000", "10,000", "0"].map((t) => html`<span>${t}</span>`)}</div>
              <div class="days">${days.map(([, h]) => (h ? html`<i style="height:${h}px"></i>` : html`<span></span>`))}</div>
            </div>
            <div class="days axis">${days.map(([d]) => html`<span>${d}</span>`)}</div>
            <div class="range">
              <svg viewBox="0 0 1029 39" preserveAspectRatio="none" aria-hidden="true">
                <path d="M0 13.500H1029M0 26.500H1029" stroke="#edf0f2"/>
                ${overview.map(([bx, h]) => svg`<rect x=${bx} y=${39 - h} width="15" height=${h} fill="#d2effa"/>`)}
                <rect x="523" y="29" width="15" height="10" fill="#dff5c8"/>
              </svg>
              <div class="pick">
                ${["Range start", "Range end"].map((n) => html`<button class="grip" aria-label=${n}>${icon(11, 22, svg`<path d="M1.500 0V22M4.500 0V22M7.500 0V22M10.500 0V22" stroke="#5cc6e8"/>`)}</button>`)}
              </div>
              <span class="month">Feb</span>
            </div>
            <div class="title"><h2>Purchase orders</h2><a href="#orders">See all</a><a href="#billed">Billed</a></div>
            ${this.cards(orderStats, "three")}
          </main>
        </div>
        <div class="rail">${icon(9, 6, svg`<path fill="#8f8f8f" d="M0 5.500H9L4.500 0z"/>`)}<i></i>${icon(9, 6, svg`<path fill="#555" d="M0 .5H9L4.500 6z"/>`)}</div>
      </div>`;
  }
}

/* ------------------------------------------------------------------ */

@customElement("app-root")
export class AppRoot extends LitElement {
  static styles = css`
    :host { display: grid; grid-template-columns: minmax(0, 1fr) minmax(0, 1fr); min-height: 100vh; }
    .desk { display: flex; flex-direction: column; min-width: 0; }
    .win { flex: 1; min-height: 0; }
  `;

  render() {
    return html`
      <div class="desk"><word-window class="win"></word-window><task-bar primary></task-bar></div>
      <div class="desk"><browser-window class="win"></browser-window><task-bar></task-bar></div>`;
  }
}
